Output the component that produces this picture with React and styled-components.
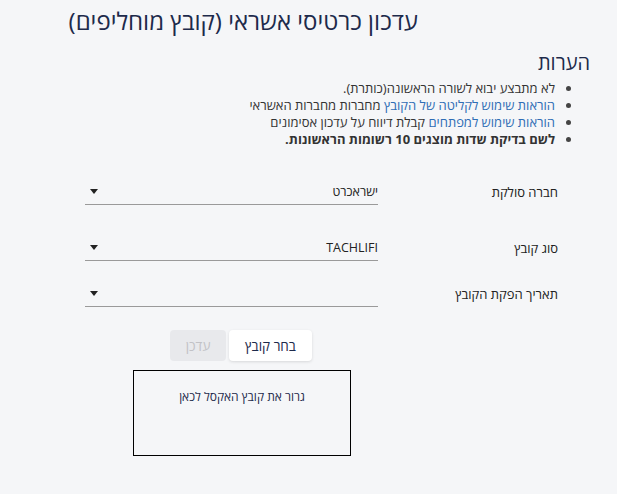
import React from 'react'
import styled, { createGlobalStyle } from 'styled-components'

const GlobalStyle = createGlobalStyle`
    html, body {
        margin: 0;
        padding: 0;
        background: #f5f6f8;
    }
    body {
        font-family: "Open Sans", "DejaVu Sans", "Liberation Sans", sans-serif;
        color: #2b2b2b;
    }
`

const Page = styled.div`
    direction: rtl;
    width: 617px;
    min-height: 494px;
    box-sizing: border-box;
    padding-top: 4px;
`

const Title = styled.h1`
    margin: 0 199px 0 0;
    font-size: 24px;
    font-weight: 400;
    color: #1d2a4b;
    line-height: 34px;
`

const NotesBlock = styled.section`
    margin: 13px 27px 0 0;
`

const NotesTitle = styled.h2`
    margin: 0;
    font-size: 20px;
    font-weight: 500;
    color: #1d2a4b;
    line-height: 24px;
`

const NotesList = styled.ul`
    margin: 5px 0 0 0;
    padding: 0 35px 0 0;
    font-size: 13px;
    line-height: 17px;
    color: #333;

    li::marker {
        color: #444;
    }
`

const NoteItem = styled.li`
    font-weight: ${(p) => (p.bold ? 700 : 400)};
`

const Link = styled.a`
    color: #2f6db5;
    text-decoration: none;
`

const Form = styled.div`
    margin: 31px 59px 0 85px;
    display: flex;
    flex-direction: column;
`

const Row = styled.div`
    display: grid;
    grid-template-columns: 180px 1fr;
    align-items: center;
    margin-top: ${(p) => p.gap}px;
`

const Label = styled.div`
    font-size: 13px;
    color: #222;
`

const Select = styled.div`
    display: flex;
    align-items: center;
    justify-content: space-between;
    height: 25px;
    border-bottom: 1px solid #9a9a9a;
    font-size: 12.5px;
    color: #222;
`

const Arrow = styled.span`
    width: 0;
    height: 0;
    margin-left: 5px;
    border-left: 4.5px solid transparent;
    border-right: 4.5px solid transparent;
    border-top: 5px solid #222;
`

const Actions = styled.div`
    margin: 23px 266px 0 0;
    width: 218px;
    display: flex;
    flex-direction: column;
    align-items: center;
`

const ButtonRow = styled.div`
    display: flex;
    gap: 3px;
    margin-right: 2px;
`

const Button = styled.button`
    font-family: inherit;
    font-size: 13.5px;
    height: 31px;
    width: ${(p) => (p.disabled ? 56 : 83)}px;
    padding: 0;
    border: none;
    border-radius: 4px;
    background: ${(p) => (p.disabled ? '#e8e9ec' : '#ffffff')};
    color: ${(p) => (p.disabled ? '#c2c2c6' : '#1d2a4b')};
    box-shadow: ${(p) => (p.disabled ? 'none' : '0 1px 3px rgba(0,0,0,0.12)')};
`

const DropZone = styled.div`
    margin-top: 9px;
    width: 218px;
    height: 86px;
    box-sizing: border-box;
    border: 1px solid #000;
    text-align: center;
    padding-top: 17px;
    font-size: 12px;
    color: #1d2a4b;
`

const fields = [
    { label: 'חברה סולקת', value: 'ישראכרט', gap: 0 },
    { label: 'סוג קובץ', value: 'TACHLIFI', gap: 30 },
    { label: 'תאריך הפקת הקובץ', value: '', gap: 20 },
]

const App = () => {
    return (
        <Page>
            <GlobalStyle />
            <Title>עדכון כרטיסי אשראי (קובץ מוחליפים)</Title>

            <NotesBlock>
                <NotesTitle>הערות</NotesTitle>
                <NotesList>
                    <NoteItem>לא מתבצע יבוא לשורה הראשונה(כותרת).</NoteItem>
                    <NoteItem>
                        <Link href="#">הוראות שימוש לקליטה של הקובץ</Link> מחברות
                        מחברות האשראי
                    </NoteItem>
                    <NoteItem>
                        <Link href="#">הוראות שימוש למפתחים</Link> קבלת דיווח על
                        עדכון אסימונים
                    </NoteItem>
                    <NoteItem bold>לשם בדיקת שדות מוצגים 10 רשומות הראשונות.</NoteItem>
                </NotesList>
            </NotesBlock>

            <Form>
                {fields.map((f) => (
                    <Row key={f.label} gap={f.gap}>
                        <Label>{f.label}</Label>
                        <Select>
                            <span>{f.value}</span>
                            <Arrow />
                        </Select>
                    </Row>
                ))}
            </Form>

            <Actions>
                <ButtonRow>
                    <Button>בחר קובץ</Button>
                    <Button disabled>עדכן</Button>
                </ButtonRow>
                <DropZone>גרור את קובץ האקסל לכאן</DropZone>
            </Actions>
        </Page>
    )
}

export default App
